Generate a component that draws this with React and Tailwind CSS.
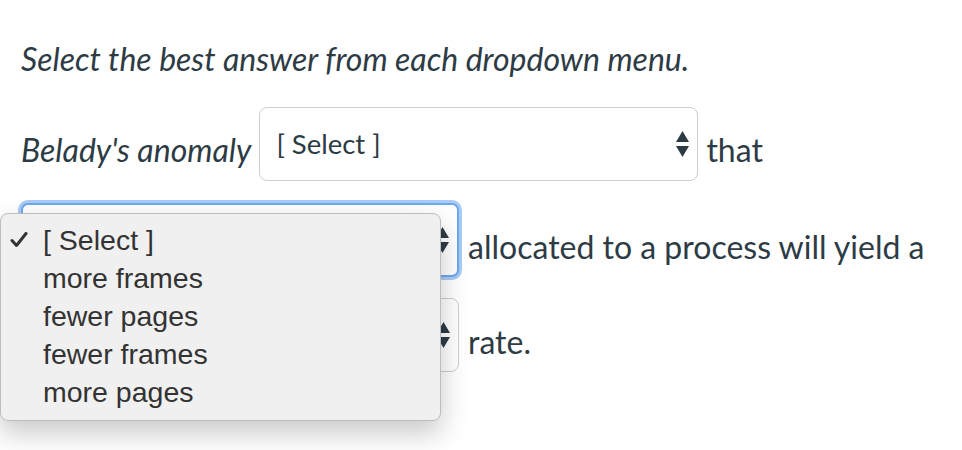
import React from "react";

function Arrows() {
  return (
    <svg
      className="absolute right-[8px] top-1/2 -translate-y-1/2"
      width="13"
      height="26"
      viewBox="0 0 13 26"
    >
      <path d="M6.5 0 L13 11 L0 11 Z" fill="#2d3b45" />
      <path d="M0 15 L13 15 L6.5 26 Z" fill="#2d3b45" />
    </svg>
  );
}

function SelectBox({ width, focused, label }) {
  return (
    <div
      className={
        focused
          ? "relative shrink-0 h-[74px] rounded-[7px] border-2 border-[#6fa8ee] bg-white shadow-[0_0_0_3px_rgba(140,186,242,0.75)]"
          : "relative shrink-0 h-[74px] rounded-[8px] border-[1.5px] border-[#c9ced2] bg-white"
      }
      style={{ width }}
    >
      {label && (
        <div className="pl-[16px] pt-[20px] text-[27.5px] leading-[32px] text-[#2d3b45]">
          {label}
        </div>
      )}
      <Arrows />
    </div>
  );
}

function Check() {
  return (
    <svg width="18" height="16" viewBox="0 0 18 16" className="shrink-0">
      <path
        d="M2 8.5 L6.5 13.5 L16 1.5"
        fill="none"
        stroke="#333"
        strokeWidth="3"
        strokeLinecap="round"
        strokeLinejoin="round"
      />
    </svg>
  );
}

export default function App() {
  const items = ["[ Select ]", "more frames", "fewer pages", "fewer frames", "more pages"];
  return (
    <div
      className="relative w-[962px] h-[450px] overflow-hidden bg-white text-[#2d3b45]"
      style={{ fontFamily: "Lato, 'Open Sans', sans-serif" }}
    >
      <div className="px-[21px] pt-[40px]">
        <p className="text-[32px] leading-[38px] italic">
          Select the best answer from each dropdown menu.
        </p>

        <div className="mt-[29px] flex items-start">
          <span className="mt-[24px] text-[32px] leading-[38px] italic">Belady's anomaly</span>
          <div className="ml-[8px]">
            <SelectBox width={439} label="[ Select ]" />
          </div>
          <span className="ml-[8px] mt-[24px] text-[32px] leading-[38px]">that</span>
        </div>

        <div className="mt-[22px] flex items-start">
          <SelectBox width={438} focused />
          <span className="ml-[9px] mt-[25px] text-[32px] leading-[38px]">
            allocated to a process will yield a
          </span>
        </div>

        <div className="mt-[21px] flex items-start">
          <SelectBox width={438} />
          <span className="ml-[9px] mt-[25px] text-[32px] leading-[38px]">rate.</span>
        </div>
      </div>

      <div
        className="absolute left-0 top-[213px] w-[441px] h-[208px] rounded-[8px] border border-[#bdbdbd] bg-[#f0f0f0] pt-[7px] shadow-[0_12px_28px_rgba(0,0,0,0.22)]"
        style={{ fontFamily: "'Liberation Sans', Arial, sans-serif" }}
      >
        {items.map((it, i) => (
          <div key={it} className="flex h-[38px] items-center text-[28.5px] text-[#333333]">
            <div className="flex w-[42px] justify-start pl-[9px]">
              {i === 0 && <Check />}
            </div>
            <span>{it}</span>
          </div>
        ))}
      </div>
    </div>
  );
}
